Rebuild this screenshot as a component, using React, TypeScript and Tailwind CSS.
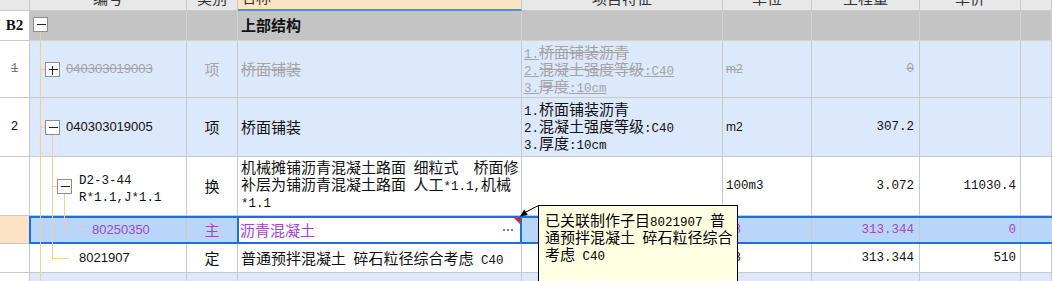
import React from 'react';
import { twMerge } from 'tailwind-merge';

// 공통 셀: 오른쪽/아래 격자선
function C({ w, className = '', children }: { w: string; className?: string; children?: React.ReactNode }) {
    return (
        <div className={twMerge('shrink-0 h-full border-r border-b border-[#c9c9c9] flex items-center', w, className)}>
            {children}
        </div>
    );
}

// 송체 느낌의 고정폭 ASCII
function M({ children }: { children: React.ReactNode }) {
    return <span className="font-['Liberation_Mono','Noto_Sans_CJK_SC',monospace] text-[12.5px] leading-[10px]">{children}</span>;
}

function Code({ children, small = false }: { children: React.ReactNode; small?: boolean }) {
    return (
        <span className={small ? "font-['Liberation_Sans',sans-serif] text-[12px] leading-[10px]" : "font-['Liberation_Sans',sans-serif] text-[13px] leading-[10px]"}>
            {children}
        </span>
    );
}

function Sp() {
    return <span className="inline-block w-[7.5px]" />;
}

function Box({ x, y, minus = false }: { x: number; y: number; minus?: boolean }) {
    return (
        <g shapeRendering="crispEdges">
            <rect x={x} y={y} width="14" height="14" fill="#fbfbfb" stroke="#8e8e8e" />
            <line x1={x + 3} y1={y + 7} x2={x + 12} y2={y + 7} stroke="#222" />
            {!minus && <line x1={x + 7} y1={y + 3} x2={x + 7} y2={y + 12} stroke="#222" />}
        </g>
    );
}

function TreeLines() {
    return (
        <svg className="absolute left-0 top-0 pointer-events-none" width="200" height="281" viewBox="0 0 200 281">
            <g stroke="#f4cd98" strokeWidth="1" fill="none" shapeRendering="crispEdges">
                <line x1="40.5" y1="32" x2="40.5" y2="281" />
                <line x1="40" y1="69.5" x2="45" y2="69.5" />
                <line x1="40" y1="127.5" x2="45" y2="127.5" />
                <line x1="52.5" y1="135" x2="52.5" y2="258.5" />
                <line x1="52" y1="186.5" x2="57" y2="186.5" />
                <line x1="64.5" y1="194" x2="64.5" y2="229.5" />
                <line x1="64" y1="229.5" x2="84" y2="229.5" />
                <line x1="52" y1="258.5" x2="69" y2="258.5" />
            </g>
            <Box x={33.5} y={17.5} minus />
            <Box x={45.5} y={62.5} />
            <Box x={45.5} y={120.5} minus />
            <Box x={57.5} y={179.5} minus />
        </svg>
    );
}

export default function App() {
    const blue = 'bg-[#dce8fc]';
    const gray = 'text-[#a4a4a4]';

    return (
        <div className="relative w-[1052px] h-[281px] overflow-hidden bg-white font-['Noto_Sans_CJK_SC',sans-serif] text-[15px] text-[#111] whitespace-nowrap">
            <div className="flex flex-col">
                {/* 헤더 (위쪽 잘림) */}
                <div className="flex h-[25px] -mt-[14px] bg-[#e8e8e8] text-[#333] shrink-0">
                    <C w="w-[30px]" />
                    <C w="w-[157px]" className="justify-center">编号</C>
                    <C w="w-[51px]" className="justify-center">类别</C>
                    <C w="w-[284px]" className="bg-[#fde4c3] pl-[3px] border-b-2 border-b-[#4a8fe2]">名称</C>
                    <C w="w-[201px]" className="justify-center">项目特征</C>
                    <C w="w-[89px]" className="justify-center">单位</C>
                    <C w="w-[108px]" className="justify-center">工程量</C>
                    <C w="w-[101px]" className="justify-center">单价</C>
                    <C w="flex-1" />
                </div>

                {/* B2 상부구조 */}
                <div className="flex h-[30px] shrink-0">
                    <C w="w-[30px]" className="justify-center bg-white font-['Liberation_Serif',serif] font-bold text-[15px]">B2</C>
                    <C w="w-[157px]" className="bg-[#c4c4c4] border-[#d2d2d2]" />
                    <C w="w-[51px]" className="bg-[#c4c4c4] border-[#d2d2d2]" />
                    <C w="w-[284px]" className="bg-[#c4c4c4] border-[#d2d2d2] pl-[3px] font-bold">上部结构</C>
                    <C w="w-[201px]" className="bg-[#c4c4c4] border-[#d2d2d2]" />
                    <C w="w-[89px]" className="bg-[#c4c4c4] border-[#d2d2d2]" />
                    <C w="w-[108px]" className="bg-[#c4c4c4] border-[#d2d2d2]" />
                    <C w="w-[101px]" className="bg-[#c4c4c4] border-[#d2d2d2]" />
                    <C w="flex-1" className="bg-[#c4c4c4] border-[#d2d2d2]" />
                </div>

                {/* 1 (삭제됨) */}
                <div className="flex h-[57px] shrink-0">
                    <C w="w-[30px]" className="justify-center bg-white text-[#777] line-through"><M>1</M></C>
                    <C w="w-[157px]" className={`${blue} pl-[36px] ${gray} line-through`}><Code>040303019003</Code></C>
                    <C w="w-[51px]" className={`${blue} justify-center ${gray}`}>项</C>
                    <C w="w-[284px]" className={`${blue} pl-[3px] ${gray} line-through`}>桥面铺装</C>
                    <C w="w-[201px]" className={`${blue} items-start pt-[2px] pl-[2px] ${gray} line-through`}>
                        <div className="leading-[17px]">
                            <div><M>1.</M>桥面铺装沥青</div>
                            <div><M>2.</M>混凝土强度等级<M>:C40</M></div>
                            <div><M>3.</M>厚度<M>:10cm</M></div>
                        </div>
                    </C>
                    <C w="w-[89px]" className={`${blue} pl-[3px] ${gray} line-through`}><Code small>m2</Code></C>
                    <C w="w-[108px]" className={`${blue} justify-end pr-[5px] ${gray} line-through`}><M>0</M></C>
                    <C w="w-[101px]" className={blue} />
                    <C w="flex-1" className={blue} />
                </div>

                {/* 2 */}
                <div className="flex h-[59px] shrink-0">
                    <C w="w-[30px]" className="justify-center bg-white"><M>2</M></C>
                    <C w="w-[157px]" className={`${blue} pl-[36px]`}><Code>040303019005</Code></C>
                    <C w="w-[51px]" className={`${blue} justify-center`}>项</C>
                    <C w="w-[284px]" className={`${blue} pl-[3px]`}>桥面铺装</C>
                    <C w="w-[201px]" className={`${blue} items-start pt-[2px] pl-[2px]`}>
                        <div className="leading-[17px]">
                            <div><M>1.</M>桥面铺装沥青</div>
                            <div><M>2.</M>混凝土强度等级<M>:C40</M></div>
                            <div><M>3.</M>厚度<M>:10cm</M></div>
                        </div>
                    </C>
                    <C w="w-[89px]" className={`${blue} pl-[3px]`}><Code small>m2</Code></C>
                    <C w="w-[108px]" className={`${blue} justify-end pr-[5px]`}><M>307.2</M></C>
                    <C w="w-[101px]" className={blue} />
                    <C w="flex-1" className={blue} />
                </div>

                {/* D2-3-44 */}
                <div className="flex h-[59px] shrink-0">
                    <C w="w-[30px]" className="bg-white" />
                    <C w="w-[157px]" className="pl-[49px]">
                        <div className="leading-[17px]">
                            <div><M>D2-3-44</M></div>
                            <div><M>R*1.1,J*1.1</M></div>
                        </div>
                    </C>
                    <C w="w-[51px]" className="justify-center">换</C>
                    <C w="w-[284px]" className="items-start pt-[1px] pl-[3px]">
                        <div className="leading-[17px]">
                            <div>机械摊铺沥青混凝土路面<Sp />细粒式<Sp /><Sp />桥面修</div>
                            <div>补层为铺沥青混凝土路面<Sp />人工<M>*1.1,</M>机械</div>
                            <div><M>*1.1</M></div>
                        </div>
                    </C>
                    <C w="w-[201px]" />
                    <C w="w-[89px]" className="pl-[3px]"><M>100m3</M></C>
                    <C w="w-[108px]" className="justify-end pr-[5px]"><M>3.072</M></C>
                    <C w="w-[101px]" className="justify-end pr-[4px]"><M>11030.4</M></C>
                    <C w="flex-1" />
                </div>

                {/* 선택된 행 */}
                <div className="flex h-[28px] shrink-0">
                    <div className="w-[29px] shrink-0 h-full bg-[#fce3c5] border-b border-[#c9c9c9]" />
                    <div className="flex flex-1 h-full border-y-2 border-l-2 border-[#1c6fdd] bg-[#b9d6fa] text-[#a048c8]">
                        <div className="w-[156px] shrink-0 border-r border-[#c9c9c9] flex items-center pl-[61px]">
                            <Code>80250350</Code>
                        </div>
                        <div className="w-[50px] shrink-0 flex items-center justify-center">主</div>
                        <div className="relative w-[285px] shrink-0 border-x-2 border-[#1c6fdd] bg-white flex items-center pl-[1px] pr-[7px]">
                            <span>沥青混凝土</span>
                            <span className="ml-auto flex gap-[2px]">
                                <i className="w-[2px] h-[2px] bg-[#5b87c9]" />
                                <i className="w-[2px] h-[2px] bg-[#5b87c9]" />
                                <i className="w-[2px] h-[2px] bg-[#5b87c9]" />
                            </span>
                            <span className="absolute top-0 right-0 w-0 h-0 border-t-[6px] border-l-[6px] border-t-[#e3262b] border-l-transparent" />
                        </div>
                        <div className="w-[201px] shrink-0 border-r border-[#c9c9c9]" />
                        <div className="w-[89px] shrink-0 border-r border-[#c9c9c9] flex items-center pl-[3px]"><M>m3</M></div>
                        <div className="w-[108px] shrink-0 border-r border-[#c9c9c9] flex items-center justify-end pr-[5px]"><M>313.344</M></div>
                        <div className="w-[101px] shrink-0 border-r border-[#c9c9c9] flex items-center justify-end pr-[4px]"><M>0</M></div>
                        <div className="flex-1" />
                    </div>
                </div>

                {/* 8021907 */}
                <div className="flex h-[29px] shrink-0">
                    <C w="w-[30px]" className="bg-white" />
                    <C w="w-[157px]" className="pl-[49px]"><Code>8021907</Code></C>
                    <C w="w-[51px]" className="justify-center">定</C>
                    <C w="w-[284px]" className="pl-[3px]">
                        <span>普通预拌混凝土<Sp />碎石粒径综合考虑<Sp /><M>C40</M></span>
                    </C>
                    <C w="w-[201px]" />
                    <C w="w-[89px]" className="pl-[3px]"><M>m3</M></C>
                    <C w="w-[108px]" className="justify-end pr-[5px]"><M>313.344</M></C>
                    <C w="w-[101px]" className="justify-end pr-[4px]"><M>510</M></C>
                    <C w="flex-1" />
                </div>

                {/* 다음 행 (잘림) */}
                <div className="flex h-[30px] shrink-0">
                    <C w="w-[30px]" className="bg-white" />
                    <C w="w-[157px]" className={blue} />
                    <C w="w-[51px]" className={blue} />
                    <C w="w-[284px]" className={blue} />
                    <C w="w-[201px]" className={blue} />
                    <C w="w-[89px]" className={blue} />
                    <C w="w-[108px]" className={blue} />
                    <C w="w-[101px]" className={blue} />
                    <C w="flex-1" className={blue} />
                </div>
            </div>

            <TreeLines />

            {/* 툴팁 화살표 */}
            <svg className="absolute left-[512px] top-[200px] pointer-events-none" width="30" height="20" viewBox="512 200 30 20">
                <line x1="538.5" y1="205.5" x2="524" y2="213" stroke="#000" strokeWidth="1" />
                <polygon points="520,216.5 524.2,209.6 527.8,215" fill="#000" />
            </svg>

            {/* 툴팁 */}
            <div className="absolute left-[538px] top-[205px] w-[200px] h-[100px] border border-black bg-[#ffffe1] pl-[6px] pt-[5px] leading-[17px] text-black">
                <div>已关联制作子目<M>8021907</M><Sp />普</div>
                <div>通预拌混凝土<Sp />碎石粒径综合</div>
                <div>考虑<Sp /><M>C40</M></div>
            </div>
        </div>
    );
}
